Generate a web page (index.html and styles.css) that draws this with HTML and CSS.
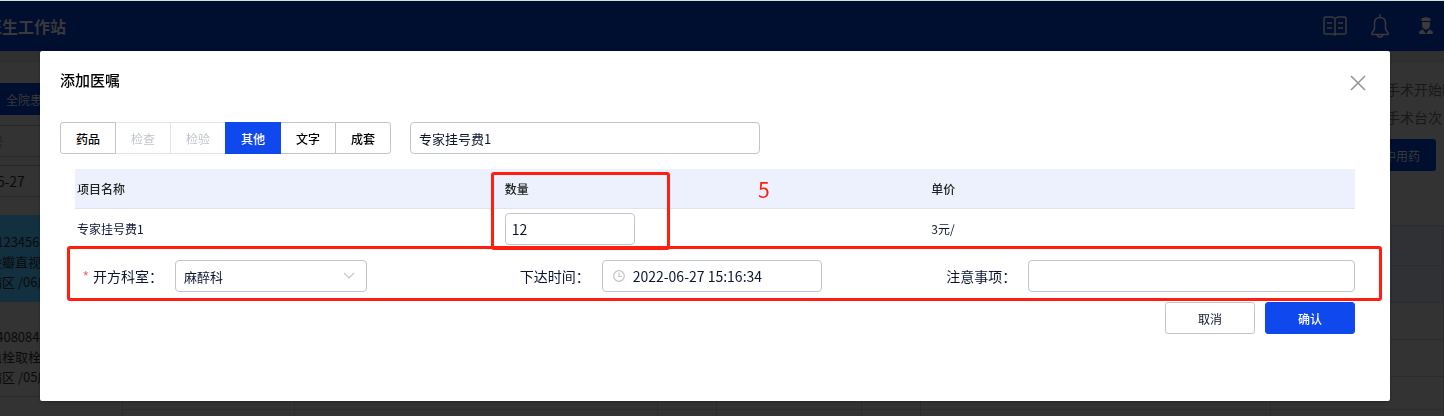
FILE: index.html
```
<!DOCTYPE html>
<html lang="zh-CN">
<head>
    <meta charset="UTF-8">
    <meta name="viewport" content="width=device-width, initial-scale=1.0">
    <title>医生工作站</title>
    <link rel="stylesheet" href="styles.css">
</head>
<body>

    <!-- Workstation page, dimmed while the dialog is open -->
    <div class="page">
        <header class="topbar">
            <h1 class="brand">医生工作站</h1>
            <div class="topbar-icons">
                <svg width="24" height="20" viewBox="0 0 24 20" fill="none" stroke="currentColor" stroke-width="1.5">
                    <path d="M12 2v17M12 2.5C11 1.5 10 1 8.500 1H2.500Q1 1 1 2.500v14Q1 18 2.500 18H9q2 0 3 .8 1-.8 3-.8h6.500q1.500 0 1.500-1.500v-14Q23 1 21.500 1h-6Q14 1 12 2.500M4 7h5M4 12h5M15 7h5M15 12h5"/>
                </svg>
                <svg width="18" height="24" viewBox="0 0 18 24" fill="none" stroke="currentColor" stroke-width="1.5">
                    <path d="M9 0v4M9 3.500c-3.500 0-5.500 2.500-5.500 6V15L1 19v1.500h16V19L14.500 15V9.500c0-3.500-2-6-5.500-6zM6 20.500q.5 2.500 3 2.500t3-2.500"/>
                </svg>
                <svg width="14" height="18" viewBox="0 0 14 18" fill="currentColor">
                    <path d="M2.500 1.500Q7-.8 11.500 1.500V4h-9zM3 5h8v3c0 2.500-1.500 4.500-4 4.500S3 10.500 3 8zM4 12.500L7 17H1q-1 0-1-1 0-2.500 4-3.500zM10 12.500L7 17h6q1 0 1-1 0-2.500-4-3.500z"/>
                </svg>
            </div>
        </header>

        <div class="workspace">
            <aside class="sidebar">
                <div class="filters">
                    <button class="filter-btn">全院患者</button>
                    <div class="filter-box muted">住院号</div>
                    <div class="filter-box">2022-06-27</div>
                </div>
                <ul class="patients">
                    <li class="patient active">
                        <span>0123456</span>
                        <span>二尖瓣直视</span>
                        <span>病区 /06床</span>
                    </li>
                    <li class="patient">
                        <span>2408084</span>
                        <span>脑血栓取栓</span>
                        <span>病区 /05床</span>
                    </li>
                </ul>
            </aside>
            <main class="content">
                <div class="surgery">
                    <p>手术开始时间</p>
                    <p>手术台次</p>
                    <button class="surgery-btn">术中用药</button>
                </div>
                <table class="orders">
                    <colgroup>
                        <col class="w-a"><col class="w-b"><col class="w-c"><col class="w-d"><col class="w-c"><col class="w-e"><col>
                    </colgroup>
                    <tr class="head"><td></td><td></td><td></td><td></td><td></td><td></td><td></td></tr>
                    <tr class="tint"><td></td><td></td><td></td><td></td><td></td><td></td><td></td></tr>
                    <tr><td></td><td></td><td></td><td></td><td></td><td></td><td></td></tr>
                    <tr><td></td><td></td><td></td><td></td><td></td><td></td><td></td></tr>
                    <tr class="short"><td></td><td></td><td></td><td></td><td></td><td></td><td></td></tr>
                    <tr><td></td><td></td><td></td><td></td><td></td><td></td><td></td></tr>
                </table>
            </main>
        </div>
    </div>

    <div class="overlay">
        <div class="dialog" role="dialog" aria-labelledby="dialogTitle">
            <div class="dialog-header">
                <h2 id="dialogTitle">添加医嘱</h2>
                <button class="close" aria-label="关闭">
                    <svg width="16" height="16" viewBox="0 0 16 16" fill="none" stroke="currentColor" stroke-width="1.500">
                        <path d="M1 1l14 14M15 1L1 15"/>
                    </svg>
                </button>
            </div>

            <div class="toolbar">
                <div class="tabs">
                    <button>药品</button>
                    <button disabled>检查</button>
                    <button disabled>检验</button>
                    <button class="selected">其他</button>
                    <button>文字</button>
                    <button>成套</button>
                </div>
                <input class="field search" type="text" value="专家挂号费1" aria-label="项目">
            </div>

            <div class="dialog-body">
                <div class="items-wrap">
                    <table class="items">
                        <thead>
                            <tr><th>项目名称</th><th>数量</th><th>单价</th></tr>
                        </thead>
                        <tbody>
                            <tr>
                                <td>专家挂号费1</td>
                                <td><input class="field qty" type="text" value="12" aria-label="数量"></td>
                                <td>3元/</td>
                            </tr>
                        </tbody>
                    </table>
                    <div class="mark mark-qty"></div>
                    <span class="mark-number">5</span>
                </div>

                <div class="form-row">
                    <div class="form-item">
                        <label for="dept"><span class="required">*</span>开方科室：</label>
                        <div class="select-wrap">
                            <select class="field" id="dept">
                                <option>麻醉科</option>
                            </select>
                            <svg class="arrow" width="12" height="8" viewBox="0 0 12 8" fill="none" stroke="currentColor" stroke-width="1.2">
                                <path d="M1 1l5 5 5-5"/>
                            </svg>
                        </div>
                    </div>
                    <div class="form-item">
                        <label for="time">下达时间：</label>
                        <div class="time-wrap">
                            <svg class="clock" width="12" height="12" viewBox="0 0 12 12" fill="none" stroke="currentColor" stroke-width="1.2">
                                <circle cx="6" cy="6" r="5.300"/>
                                <path d="M6 2.500v4h3"/>
                            </svg>
                            <input class="field" id="time" type="text" value="2022-06-27 15:16:34">
                        </div>
                    </div>
                    <div class="form-item">
                        <label for="note">注意事项：</label>
                        <input class="field note" id="note" type="text">
                    </div>
                    <div class="mark mark-form"></div>
                </div>

                <div class="actions">
                    <button class="btn">取消</button>
                    <button class="btn primary">确认</button>
                </div>
            </div>
        </div>
    </div>

</body>
</html>
```
FILE: styles.css
```
* {
    box-sizing: border-box;
}

body {
    margin: 0;
    font-family: "Noto Sans CJK SC", sans-serif;
    font-size: 14px;
    color: #0c1433;
    overflow: hidden;
}

button,
input,
select {
    font-family: inherit;
    color: inherit;
}

/* Dimmed page */
.page {
    height: 100vh;
    overflow: hidden;
    background-color: #303030;
    border-top: 1px solid #d3e2dc;
    color: #0a0a0c;
    display: flex;
    flex-direction: column;
}

.topbar {
    flex: none;
    height: 50px;
    background-color: #000e2f;
    color: #3a3a3a;
    display: flex;
    justify-content: space-between;
    align-items: center;
    padding-right: 11px;
}

.brand {
    margin: 0 0 0 -14px;
    font-size: 16px;
    line-height: 24px;
    font-weight: 700;
}

.topbar-icons {
    display: flex;
    align-items: center;
    gap: 24px;
}

.topbar-icons svg:last-child {
    margin-left: 6px;
}

.workspace {
    flex: 1;
    min-height: 0;
    margin-top: 12px;
    background-color: #333;
    display: flex;
}

.sidebar {
    flex: none;
    width: 122px;
    overflow: hidden;
}

.filters {
    padding-top: 20px;
    display: grid;
    gap: 8px;
    margin-left: -55px;
    height: 152px;
    align-content: start;
}

.filter-btn {
    height: 32px;
    margin-bottom: 2px;
    border: 0;
    background-color: #000e2f;
    color: #3a3a3a;
    font-size: 12px;
    padding: 0 0 0 61px;
    text-align: left;
}

.filter-box {
    height: 32px;
    line-height: 30px;
    border: 1px solid #27282b;
}

.filter-box.muted {
    color: #242527;
    padding-left: 16px;
}

.filter-box:last-child {
    padding-left: 7px;
}

.patients {
    list-style: none;
    margin: 0;
    padding: 0;
}

.patient {
    height: 87px;
    padding-top: 17px;
    border-bottom: 1px solid #292a30;
    margin-bottom: 8px;
    font-size: 13px;
    line-height: 20px;
    display: flex;
    flex-direction: column;
    white-space: nowrap;
}

.patient span {
    margin-left: -11px;
}

.patient span:nth-child(2) {
    margin-left: -24px;
}

.patient.active {
    background-color: #12303f;
    border-bottom: 0;
}

.content {
    flex: 1;
    min-width: 0;
    display: flex;
    flex-direction: column;
}

.surgery {
    flex: none;
    height: 162px;
    padding: 12px 8px 0 0;
    display: flex;
    flex-direction: column;
    align-items: flex-end;
    color: #17181a;
}

.surgery p {
    margin: 0;
    width: 50px;
    line-height: 28px;
    white-space: nowrap;
}

.surgery-btn {
    height: 32px;
    margin-top: 8px;
    padding: 0 16px;
    border: 0;
    border-radius: 3px;
    background-color: #000e2f;
    color: #3a3a3a;
    font-size: 12px;
}

.orders {
    flex: none;
    width: 100%;
    table-layout: fixed;
    border-collapse: collapse;
}

.orders td {
    height: 37px;
    padding: 0;
    border: 1px solid #2c2c2e;
}

.orders .head td {
    height: 40px;
    background-color: #303134;
}

.orders .tint td {
    background-color: #303134;
}

.orders .short td {
    height: 33px;
}

.w-a { width: 172px; }
.w-b { width: 363px; }
.w-c { width: 59px; }
.w-d { width: 145px; }
.w-e { width: 350px; }

/* Dialog */
.overlay {
    position: fixed;
    inset: 0;
    padding: 51px 54px 0 40px;
}

.dialog {
    background-color: #fff;
    border-radius: 2px;
    padding: 15px 20px 67px;
    box-shadow: 0 1px 3px rgba(0, 0, 0, 0.3);
}

.dialog-header {
    display: flex;
    justify-content: space-between;
    align-items: flex-start;
    height: 56px;
}

.dialog-header h2 {
    margin: 0;
    font-size: 15px;
    line-height: 28px;
    font-weight: 500;
    color: #000;
}

.close {
    border: 0;
    padding: 9px 4px;
    background: none;
    color: #8f939b;
    line-height: 0;
    cursor: pointer;
}

.toolbar {
    display: flex;
    gap: 19px;
}

.tabs {
    display: flex;
}

.tabs button {
    width: 56px;
    height: 32px;
    padding: 0;
    margin-right: -1px;
    border: 1px solid #c0c4cf;
    background-color: #fff;
    color: #000;
    font-size: 12px;
    font-weight: 500;
    cursor: pointer;
}

.tabs button:first-child {
    border-radius: 3px 0 0 3px;
    position: relative;
}

.tabs button:last-child {
    border-radius: 0 3px 3px 0;
    margin-right: 0;
}

.tabs button:disabled {
    border-color: #e1e4ee;
    color: #c0c4cc;
    font-weight: 400;
}

.tabs button.selected {
    position: relative;
    border-color: #0f48ed;
    background-color: #0f48ed;
    color: #fff;
}

.field {
    height: 32px;
    padding: 0 8px;
    border: 1px solid #c0c4cf;
    border-radius: 4px;
    background-color: #fff;
    font-size: 14px;
}

.search {
    width: 350px;
    font-size: 13px;
}

.dialog-body {
    padding: 15px 15px 0;
}

.items-wrap {
    position: relative;
}

.items {
    width: 100%;
    table-layout: fixed;
    border-collapse: separate;
    border-spacing: 0;
    font-size: 12px;
}

.items th,
.items td {
    height: 40px;
    padding: 0 3px;
    text-align: left;
    border-bottom: 1px solid #dfe3ec;
}

.items th:first-child,
.items td:first-child {
    padding-left: 2px;
}

.items th {
    background-color: #ecf1fd;
    font-weight: 500;
    color: #222;
}

.items .qty {
    display: block;
    width: 130px;
    margin-top: 1px;
    padding: 0 6px;
}

.form-row {
    position: relative;
    display: grid;
    grid-template-columns: repeat(3, 1fr);
    padding: 11px 0 10px;
}

.form-item {
    display: flex;
    align-items: center;
}

.form-item label {
    flex: none;
    width: 100px;
    padding-right: 12px;
    text-align: right;
}

.required {
    color: #f56c6c;
    margin-right: 4px;
}

.select-wrap,
.time-wrap {
    position: relative;
    width: 192px;
}

.select-wrap select {
    width: 100%;
    appearance: none;
    font-size: 13px;
}

.arrow {
    position: absolute;
    right: 12px;
    top: 12px;
    color: #c0c4cc;
    pointer-events: none;
}

.time-wrap {
    width: 220px;
}

.time-wrap input {
    width: 100%;
    padding-left: 30px;
}

.clock {
    position: absolute;
    left: 11px;
    top: 10px;
    color: #c0c4cc;
}

.note {
    flex: 1;
    min-width: 0;
}

.actions {
    display: flex;
    justify-content: flex-end;
    gap: 10px;
}

.btn {
    width: 90px;
    height: 32px;
    border: 1px solid #c0c4cf;
    border-radius: 3px;
    background-color: #fff;
    font-size: 12px;
    cursor: pointer;
}

.btn.primary {
    border-color: #0f48ed;
    background-color: #0f48ed;
    color: #fff;
    font-weight: 500;
}

/* Red annotations */
.mark {
    position: absolute;
    border: 3px solid #ff1f10;
    border-radius: 3px;
    pointer-events: none;
}

.mark-qty {
    left: 416px;
    top: 3px;
    width: 179px;
    height: 78px;
    z-index: 1;
}

.mark-form {
    inset: -3px -27px 1px -8px;
}

.mark-number {
    position: absolute;
    left: 683px;
    top: 5px;
    font-size: 21px;
    line-height: 30px;
    color: #ff1f10;
}
```
